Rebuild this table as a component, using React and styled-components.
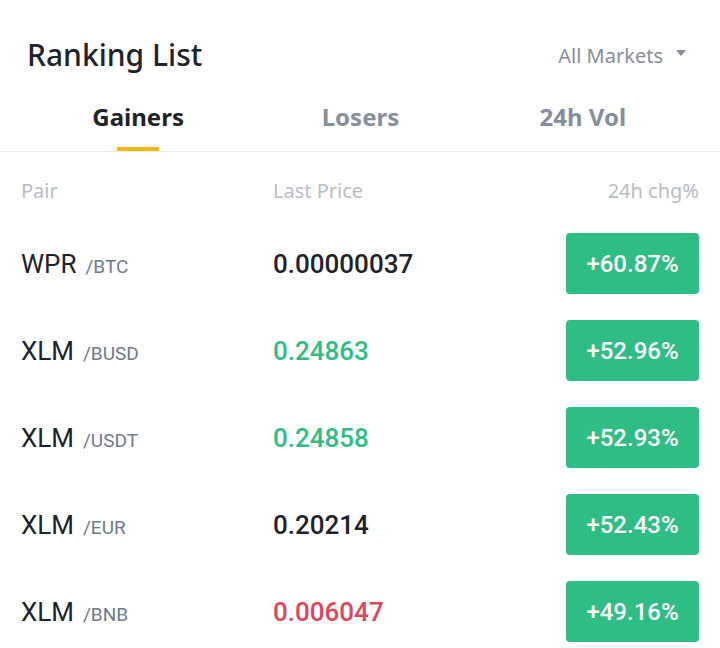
import styled, { createGlobalStyle } from "styled-components";

const GlobalStyle = createGlobalStyle`
  body {
    margin: 0;
    background: #ffffff;
    font-family: "Noto Sans", Roboto, sans-serif;
  }
`

const Container = styled.div`
  width: 720px;
  background: #ffffff;
`

const TopBar = styled.div`
  display: flex;
  align-items: center;
  justify-content: space-between;
  padding: 37px 34px 0 27px;
`

const Title = styled.h1`
  margin: 0;
  font-size: 30px;
  line-height: 36px;
  font-weight: 500;
  color: #1e2329;
`

const MarketSelect = styled.div`
  display: flex;
  align-items: center;
  gap: 13px;
  font-size: 20px;
  color: #848e9c;
`

const Caret = styled.span`
  width: 0;
  height: 0;
  border-left: 5px solid transparent;
  border-right: 5px solid transparent;
  border-top: 6px solid #848e9c;
  margin-top: -4px;
`

const TabBar = styled.div`
  display: grid;
  grid-template-columns: repeat(3, 1fr);
  padding: 30px 26px 0 27px;
  border-bottom: 1px solid #eaecef;
`

const Tab = styled.div`
  display: flex;
  flex-direction: column;
  align-items: center;
  font-size: 24px;
  line-height: 28px;
  font-weight: 700;
  color: ${p => (p.active ? "#1e2329" : "#848e9c")};
`

const Indicator = styled.span`
  width: 42px;
  height: 4px;
  margin-top: 16px;
  background: ${p => (p.active ? "#f0b90b" : "transparent")};
`

const Table = styled.div`
  padding: 27px 21px 0 21px;
`

const HeadRow = styled.div`
  display: grid;
  grid-template-columns: 252px 1fr auto;
  font-size: 20px;
  line-height: 24px;
  color: #b7bdc6;
  margin-bottom: 17px;
`

const Row = styled.div`
  display: grid;
  grid-template-columns: 252px 1fr auto;
  align-items: center;
  height: 87px;
  font-family: Roboto, "Noto Sans", sans-serif;
`

const Pair = styled.div`
  display: flex;
  align-items: baseline;
  gap: 9px;
`

const Base = styled.span`
  font-size: 26px;
  color: #1e2329;
`

const Quote = styled.span`
  font-size: 19px;
  color: #707a8a;
`

const Price = styled.div`
  font-size: 26px;
  font-weight: 500;
  color: ${p => p.color};
`

const Badge = styled.div`
  width: 133px;
  height: 61px;
  border-radius: 4px;
  background: #2ebd85;
  color: #ffffff;
  display: flex;
  align-items: center;
  justify-content: center;
  font-size: 24px;
  font-weight: 500;
`

const priceColors = {
  neutral: "#1e2329",
  up: "#2ebd85",
  down: "#e0435b",
}

const rows = [
  { base: "WPR", quote: "/BTC", price: "0.00000037", trend: "neutral", chg: "+60.87%" },
  { base: "XLM", quote: "/BUSD", price: "0.24863", trend: "up", chg: "+52.96%" },
  { base: "XLM", quote: "/USDT", price: "0.24858", trend: "up", chg: "+52.93%" },
  { base: "XLM", quote: "/EUR", price: "0.20214", trend: "neutral", chg: "+52.43%" },
  { base: "XLM", quote: "/BNB", price: "0.006047", trend: "down", chg: "+49.16%" },
]

const tabs = ["Gainers", "Losers", "24h Vol"]

const App = () => {
  return (
    <Container>
      <GlobalStyle />
      <TopBar>
        <Title>Ranking List</Title>
        <MarketSelect>
          All Markets
          <Caret />
        </MarketSelect>
      </TopBar>
      <TabBar>
        {tabs.map((t, i) => (
          <Tab key={t} active={i === 0}>
            {t}
            <Indicator active={i === 0} />
          </Tab>
        ))}
      </TabBar>
      <Table>
        <HeadRow>
          <span>Pair</span>
          <span>Last Price</span>
          <span>24h chg%</span>
        </HeadRow>
        {rows.map((r, i) => (
          <Row key={i}>
            <Pair>
              <Base>{r.base}</Base>
              <Quote>{r.quote}</Quote>
            </Pair>
            <Price color={priceColors[r.trend]}>{r.price}</Price>
            <Badge>{r.chg}</Badge>
          </Row>
        ))}
      </Table>
    </Container>
  );
};

export default App
